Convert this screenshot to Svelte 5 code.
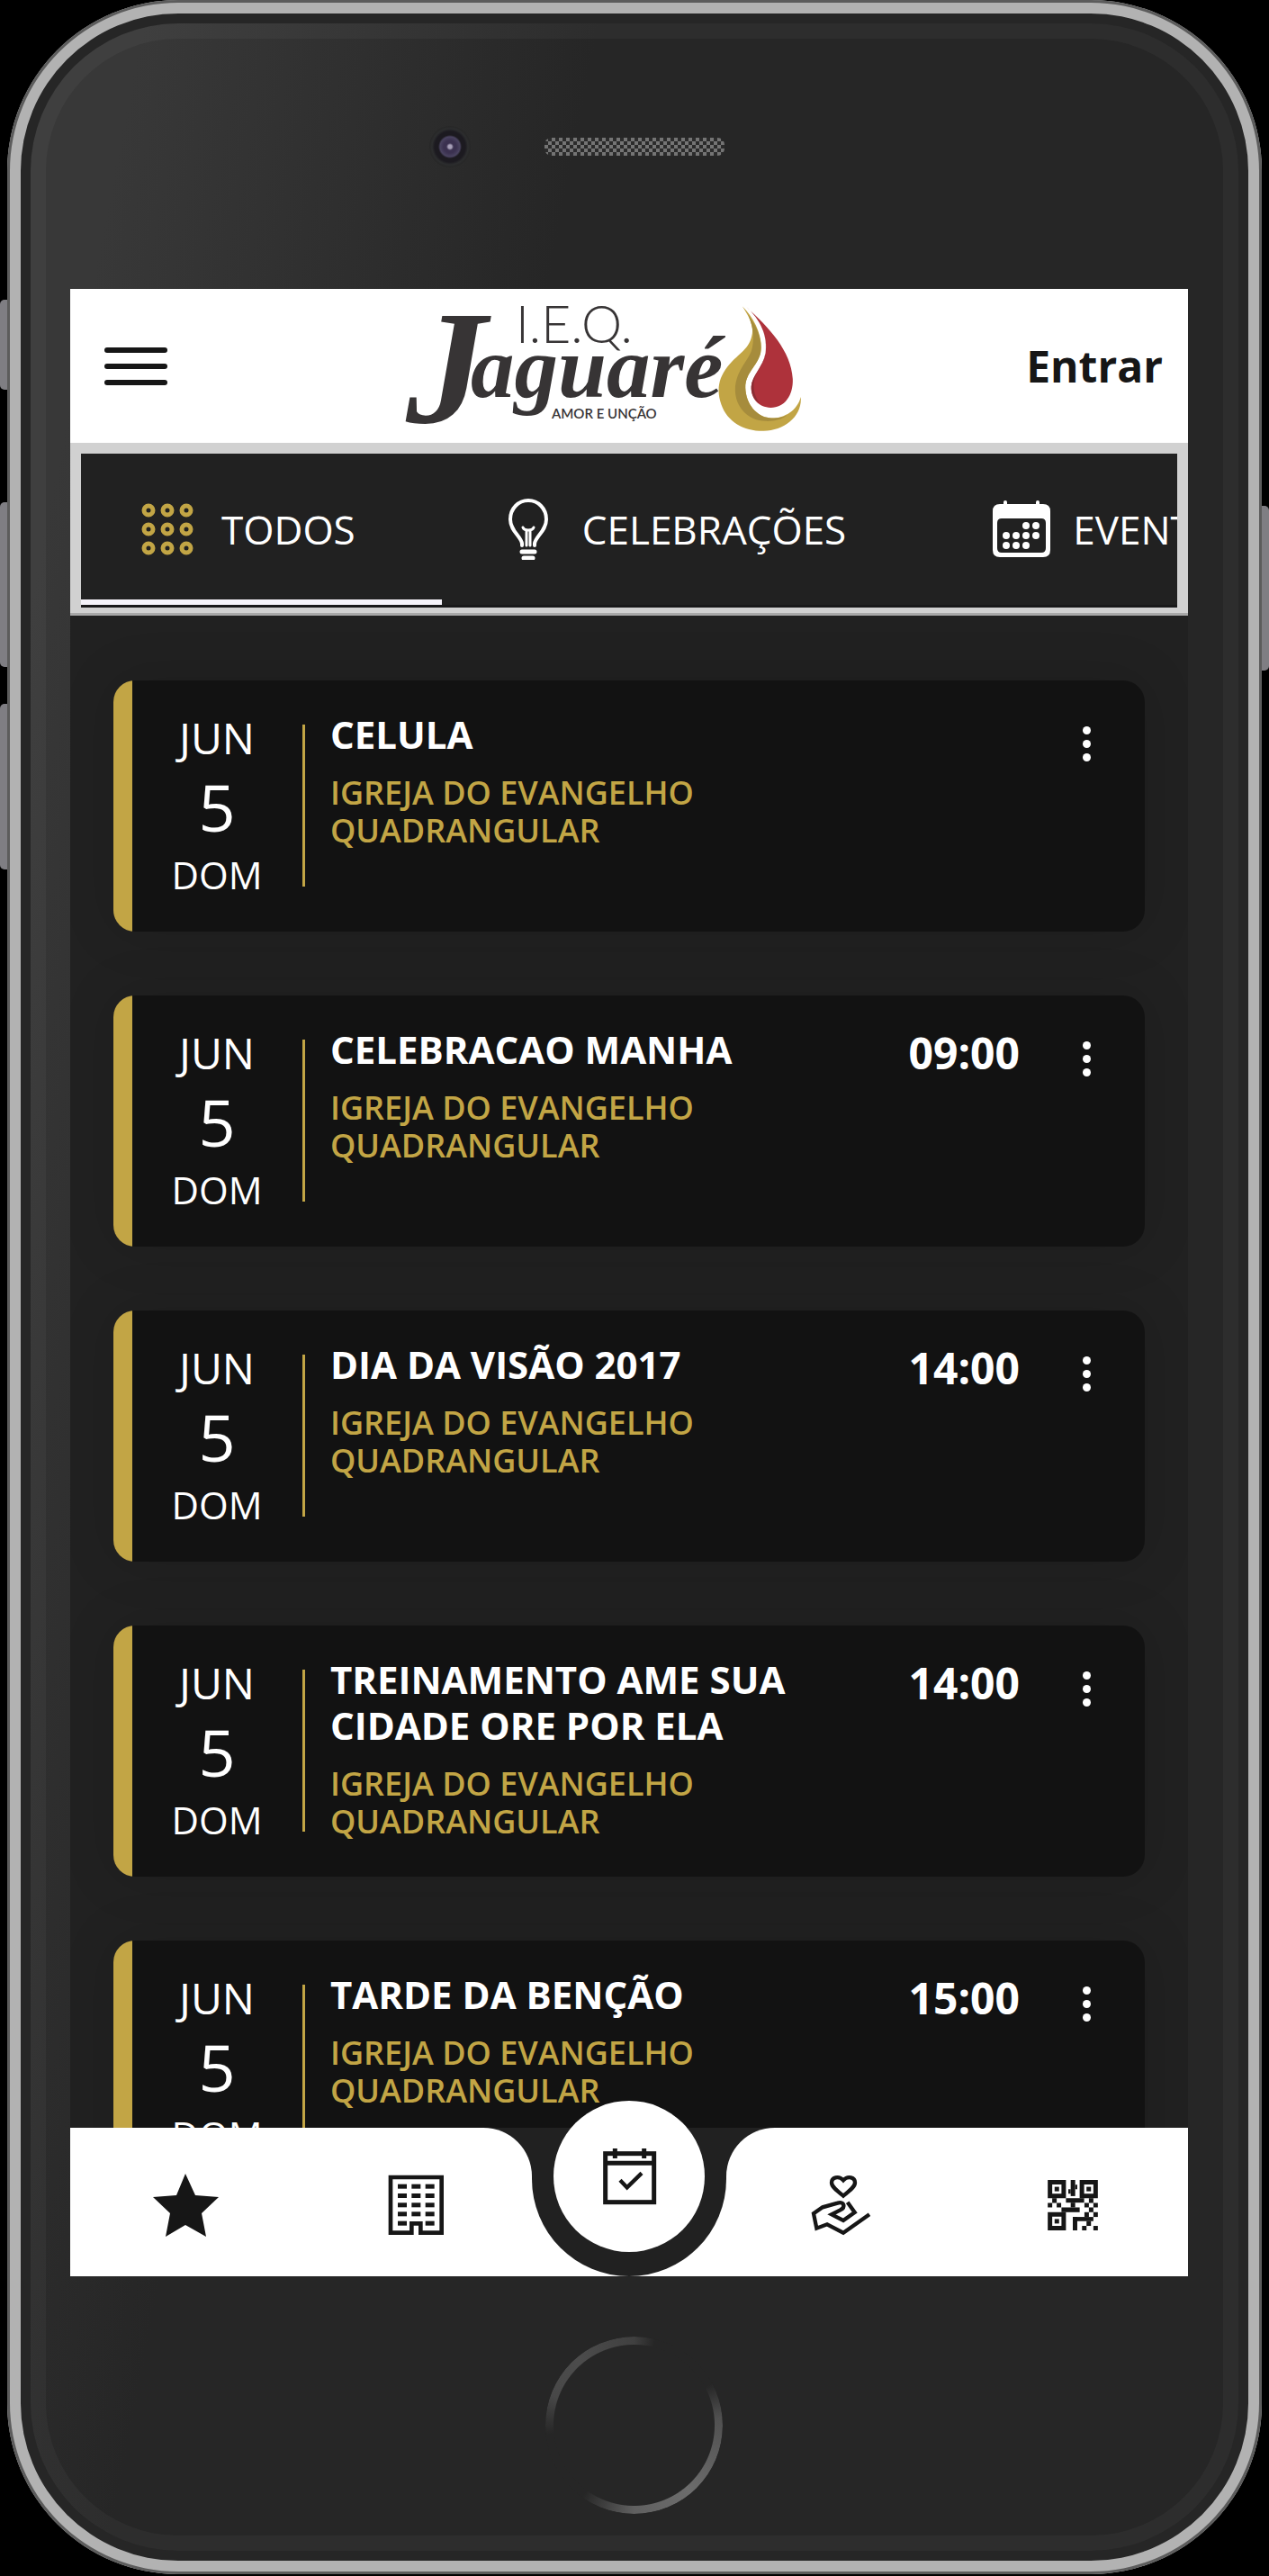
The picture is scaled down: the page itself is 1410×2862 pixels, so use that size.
<script>
  const church = 'IGREJA DO EVANGELHO QUADRANGULAR';
  const events = [
    { title: 'CELULA', time: '' },
    { title: 'CELEBRACAO MANHA', time: '09:00' },
    { title: 'DIA DA VISÃO 2017', time: '14:00' },
    { title: 'TREINAMENTO AME SUA CIDADE ORE POR ELA', time: '14:00' },
    { title: 'TARDE DA BENÇÃO', time: '15:00' }
  ];
  const tabs = [
    { id: 'all', label: 'TODOS' },
    { id: 'bulb', label: 'CELEBRAÇÕES' },
    { id: 'calendar', label: 'EVENTOS' }
  ];
  let active = $state('all');

  const ringSteps = [8, 29, 50];
  const calendarDots = [[37, 28], [48, 28], [15, 39], [26, 39], [37, 39], [48, 39], [15, 50], [26, 50], [37, 50]];
  const windows = [321, 352, 383, 413, 444].flatMap((y) =>
    [83, 129, 175].filter((x) => !(y === 444 && x === 129)).map((x) => [x, y])
  );
  const finders = [[822, 66], [929, 66], [822, 174]];
  const modules = [
    [899, 66, 15, 54], [891, 97, 8, 15], [914, 82, 7, 15], [837, 127, 15, 16], [822, 143, 15, 15],
    [852, 143, 15, 15], [883, 127, 61, 15], [899, 142, 15, 16], [868, 158, 61, 16], [960, 127, 15, 16],
    [945, 143, 15, 15], [975, 143, 15, 15], [960, 158, 15, 16], [945, 174, 15, 16], [975, 174, 15, 16],
    [906, 190, 69, 14], [906, 190, 15, 45], [952, 204, 15, 16], [937, 220, 15, 15], [975, 220, 15, 15]
  ];
</script>

<div class="stage">
  <span class="key key-mute"></span>
  <span class="key key-up"></span>
  <span class="key key-down"></span>
  <span class="key key-power"></span>

  <div class="phone">
    <div class="sensors">
      <span class="camera"></span>
      <svg class="speaker" viewBox="0 0 200 20" aria-hidden="true">
        <defs>
          <pattern id="mesh" width="8" height="8" patternUnits="userSpaceOnUse">
            <rect width="8" height="8" fill="#2b2b2b" />
            <path d="M0 0h4v4h-4zM4 4h4v4h-4z" fill="#747474" />
          </pattern>
        </defs>
        <rect width="200" height="20" rx="8" fill="url(#mesh)" />
      </svg>
    </div>

    <main class="screen">
      <header class="topbar">
        <button class="burger" aria-label="Menu"><i></i><i></i><i></i></button>
        <svg class="logo" viewBox="0 0 456 152" role="img" aria-label="I.E.Q. Jaguaré Amor e Unção">
          <text class="logo-top" x="138" y="50">I.E.Q.</text>
          <text class="logo-initial" x="16" y="138">J</text>
          <text class="logo-name" x="88" y="110">aguaré</text>
          <text class="logo-motto" x="178" y="134">AMOR E UNÇÃO</text>
          <g transform="scale(.344 .333) translate(-110 -60)">
            <path fill="#c2a545" d="M1243 88C1270 130 1282 160 1273 190C1262 235 1225 250 1195 290C1165 330 1160 370 1175 415C1195 475 1250 505 1312 504C1380 502 1437 455 1432 390C1420 440 1370 465 1330 460C1290 455 1255 415 1253 360C1253 310 1290 290 1302 245C1312 195 1285 130 1243 88Z" />
            <path fill="#a68c3c" d="M1262 116C1282 165 1282 205 1272 238C1258 275 1222 305 1220 365C1220 425 1262 470 1318 471C1345 472 1370 466 1388 452C1370 460 1350 463 1330 460C1290 455 1255 415 1253 360C1253 310 1290 290 1302 245C1310 200 1290 155 1262 116Z" />
            <path fill="#ae323b" d="M1256 90C1330 160 1400 235 1406 330C1408 385 1380 426 1335 426C1295 425 1270 395 1272 355C1275 320 1310 290 1318 245C1328 190 1300 130 1256 90Z" />
            <path fill="#8c2d33" d="M1314 180C1326 225 1318 262 1302 290C1286 315 1280 330 1280 355C1281 380 1288 396 1300 412C1280 400 1271 380 1272 355C1275 320 1310 290 1318 245C1320 225 1320 205 1314 180Z" />
          </g>
        </svg>
        <a class="login" href="#entrar">Entrar</a>
      </header>

      <div class="tabs" role="tablist">
        {#each tabs as tab}
          <button class="tab" class:active={active === tab.id} role="tab" aria-selected={active === tab.id} onclick={() => (active = tab.id)}>
            <span class="tab-icon">
              {#if tab.id === 'all'}
                <svg width="58" height="58" viewBox="0 0 58 58" fill="none" stroke="#c2a545" stroke-width="5">
                  {#each ringSteps as y}{#each ringSteps as x}<circle cx={x} cy={y} r="5" />{/each}{/each}
                </svg>
              {:else if tab.id === 'bulb'}
                <svg width="46" height="68" viewBox="0 0 46 68" fill="none" stroke="#fff" stroke-width="4" stroke-linecap="round">
                  <path d="M16 52V50C15 42 3 36 3 23C3 11 12 2 23 2S43 11 43 23C43 36 31 42 30 50V52" />
                  <path d="M17 32Q18 35 23 35Q28 35 29 32M21 36V52M25 36V52" stroke-width="3" />
                  <path d="M16 59H30M18 66H28" stroke-width="5" />
                </svg>
              {:else}
                <svg width="64" height="64" viewBox="0 0 64 64" fill="#fff">
                  <rect x="12" width="4" height="10" rx="2" /><rect x="48" width="4" height="10" rx="2" />
                  <path fill-rule="evenodd" d="M8 4H56Q64 4 64 12V55Q64 63 56 63H8Q0 63 0 55V12Q0 4 8 4ZM10 20Q5 20 5 25V53Q5 58 10 58H54Q59 58 59 53V25Q59 20 54 20Z" />
                  {#each calendarDots as [x, y]}<circle cx={x} cy={y} r="4" />{/each}
                </svg>
              {/if}
            </span>
            <span>{tab.label}</span>
          </button>
        {/each}
      </div>

      <section class="list">
        {#each events as event}
          <article class="card">
            <div class="date">
              <span class="month">JUN</span>
              <span class="day">5</span>
              <span class="weekday">DOM</span>
            </div>
            <div class="info">
              <h2>{event.title}</h2>
              <p>{church}</p>
            </div>
            <time>{event.time}</time>
            <button class="more" aria-label="Mais opções"><i></i><i></i><i></i></button>
          </article>
        {/each}
      </section>

      <nav class="bottom">
        <div class="side left">
          <a href="#favoritos" aria-label="Favoritos">
            <svg width="73" height="70" viewBox="0 0 73 70" fill="#161616"><path d="M36 0L47 24L73 26L54 44L59 70L36 57L14 70L19 44L0 26L26 24Z" /></svg>
          </a>
          <a href="#igrejas" aria-label="Igrejas">
            <svg width="63" height="68" viewBox="50 289 189 204" fill="#161616">
              <path d="M59 298H229V483H159V452H129V483H59Z" fill="none" stroke="#161616" stroke-width="14" />
              {#each windows as [x, y]}<rect {x} {y} width="30" height="15" />{/each}
            </svg>
          </a>
        </div>
        <div class="notch">
          <div class="well">
            <a class="agenda" href="#agenda" aria-label="Agenda">
              <svg width="61" height="64" viewBox="760 195 183 192" fill="none" stroke="#161616" stroke-width="15">
                <rect x="771" y="215" width="162" height="162" />
                <path d="M771 247H933M803 198V231M900 198V231" />
                <path d="M820 304L843 328L892 280" stroke-width="13" />
              </svg>
            </a>
          </div>
        </div>
        <div class="side right">
          <a href="#doar" aria-label="Doações">
            <svg width="68" height="68" viewBox="36 48 204 204" fill="none" stroke="#161616" stroke-width="13">
              <path d="M144 119C120 100 105 88 105 75C105 58 128 50 144 67C160 50 183 58 183 75C183 88 168 100 144 119Z" />
              <path d="M158 140L182 174L144 201L105 181L134 166C152 157 148 136 125 143L75 157L45 178L55 227L90 214L144 242L231 181" />
            </svg>
          </a>
          <a href="#qrcode" aria-label="QR Code">
            <svg width="56" height="56" viewBox="822 66 168 169" fill="#161616">
              {#each finders as [x, y]}
                <path fill-rule="evenodd" d="M{x} {y}h61v61h-61zM{x + 15} {y + 15}v31h31v-31z" />
                <rect x={x + 23} y={y + 23} width="15" height="15" />
              {/each}
              {#each modules as [x, y, width, height]}<rect {x} {y} {width} {height} />{/each}
            </svg>
          </a>
        </div>
      </nav>
    </main>

    <div class="chin"><button class="home" aria-label="Início"></button></div>
  </div>
</div>

<style>
  :global(body) {
    margin: 0;
    background: #000;
  }
  * {
    box-sizing: border-box;
  }
  button {
    padding: 0;
    border: 0;
    background: none;
    color: inherit;
    font: inherit;
    cursor: pointer;
  }
  svg {
    display: block;
  }
  .stage {
    position: relative;
    padding: 0 8px 2px;
    font-family: 'Open Sans', 'Noto Sans', sans-serif;
  }
  .key {
    position: absolute;
    left: 0;
    width: 10px;
    background: #7f7e83;
    border-radius: 5px 0 0 5px;
  }
  .key-mute { top: 333px; height: 100px; }
  .key-up { top: 558px; height: 183px; }
  .key-down { top: 782px; height: 184px; }
  .key-power {
    top: 562px;
    left: auto;
    right: 0;
    height: 183px;
    border-radius: 0 5px 5px 0;
  }
  .phone {
    position: relative;
    padding: 0 82px 0 70px;
    border-radius: 190px;
    background: linear-gradient(101deg, #383838 8%, #262626 34%);
    box-shadow:
      inset 0 0 0 3px #5c5c5c,
      inset 0 0 0 15px #b2b2b2,
      inset 0 0 0 26px #262626,
      inset 0 0 0 43px rgba(255, 255, 255, 0.035);
  }
  .sensors {
    display: grid;
    grid-template-columns: 1fr 200px 1fr;
    align-items: center;
    padding: 140px 0 135px 12px;
  }
  .camera {
    justify-self: end;
    width: 46px;
    height: 46px;
    margin-right: 82px;
    border-radius: 50%;
    background: radial-gradient(circle, #a79fb8 0 2px, #3b3150 4px 7px, #4a4360 11px, #1c1a20 13px 17px, #2c2d2e 20px, #262626 23px);
  }
  .speaker {
    width: 200px;
    height: 20px;
  }
  .screen {
    overflow: hidden;
    background: #212121;
  }
  .topbar {
    display: flex;
    align-items: center;
    justify-content: space-between;
    height: 171px;
    padding: 0 28px 0 38px;
    background: #fff;
  }
  .burger {
    display: grid;
    gap: 12px;
    width: 70px;
  }
  .burger i {
    height: 6px;
    border-radius: 3px;
    background: #161616;
  }
  .logo {
    width: 456px;
    height: 152px;
    fill: #373435;
  }
  .logo-top {
    font: 300 57px Lato, sans-serif;
  }
  .logo-initial {
    font: italic 700 180px 'Liberation Serif', serif;
  }
  .logo-name {
    font: italic 700 97px 'Liberation Serif', serif;
  }
  .logo-motto {
    font: 600 15px Lato, sans-serif;
  }
  .login {
    color: #161616;
    font-size: 48px;
    font-weight: 700;
    line-height: 64px;
    text-decoration: none;
  }
  .tabs {
    display: flex;
    overflow: hidden;
    border: solid #d1d1d1;
    border-width: 12px 12px 6px;
    box-shadow: 0 3px #a8a8a8;
    margin-bottom: 3px;
  }
  .tab {
    flex: none;
    display: flex;
    align-items: center;
    gap: 31px;
    height: 171px;
    padding: 0 96px 0 67px;
    border-bottom: 3px solid #19191a;
    color: #fff;
    font-size: 44px;
    line-height: 60px;
  }
  .tab.active {
    box-shadow: inset 0 -6px #f5f3fa;
  }
  .tab-icon {
    display: grid;
    place-items: center;
    width: 58px;
  }
  .list {
    display: grid;
    gap: 71px;
    padding: 72px 48px 0;
  }
  .card {
    display: flex;
    align-items: flex-start;
    min-height: 279px;
    padding: 34px 33px 0 21px;
    border-radius: 24px;
    background: linear-gradient(to right, #c2a545 21px, #121212 21px);
    box-shadow: 0 0 60px rgba(0, 0, 0, 0.14);
    color: #fff;
  }
  .date {
    flex: none;
    display: grid;
    justify-items: center;
    align-content: center;
    width: 192px;
    height: 180px;
    margin-top: 15px;
    padding: 2px 1px 0 0;
    border-right: 3px solid #c2a545;
  }
  .month {
    font-size: 48px;
    line-height: 60px;
  }
  .day {
    font-size: 72px;
    line-height: 92px;
  }
  .weekday {
    font-size: 42px;
    line-height: 60px;
  }
  .info {
    flex: 1;
    min-width: 0;
    padding-left: 28px;
  }
  h2 {
    margin: 0;
    font-size: 42px;
    font-weight: 700;
    line-height: 51px;
  }
  p {
    max-width: 480px;
    margin: 19px 0 0;
    color: #c2a545;
    font-size: 36px;
    font-weight: 600;
    line-height: 42px;
  }
  time {
    flex: none;
    min-width: 123px;
    font-size: 48px;
    font-weight: 700;
    line-height: 60px;
    text-align: right;
  }
  .more {
    flex: none;
    display: grid;
    justify-items: center;
    gap: 6px;
    width: 64px;
    margin-left: 42px;
    padding: 17px 0;
  }
  .more i {
    width: 9px;
    height: 9px;
    border-radius: 50%;
    background: #fff;
  }
  .bottom {
    position: relative;
    display: flex;
    height: 165px;
    margin-top: -71px;
    background: #212121;
  }
  .side {
    flex: 1;
    display: grid;
    grid-template-columns: 1fr 1fr;
    place-items: center;
    padding-top: 6px;
    background: #fff;
  }
  .left {
    border-radius: 0 54px 0 0;
  }
  .right {
    border-radius: 54px 0 0;
  }
  .notch {
    width: 216px;
    background: linear-gradient(#212121 57px, #fff 57px);
  }
  .well {
    display: flex;
    justify-content: center;
    height: 165px;
    border-radius: 0 0 108px 108px;
    background: #212121;
  }
  .agenda {
    display: grid;
    place-items: center;
    width: 168px;
    height: 168px;
    margin-top: -30px;
    border-radius: 50%;
    background: #fff;
  }
  .chin {
    display: flex;
    justify-content: center;
    padding: 67px 0 67px 10px;
  }
  .home {
    width: 197px;
    height: 197px;
    border-radius: 50%;
    background: conic-gradient(#404040, #262626 14deg 62deg, #505050 85deg, #6c6c6c 140deg, #606060 180deg, #262626 216deg 264deg, #484848 290deg, #4c4c4c 320deg, #404040);
    mask: radial-gradient(closest-side, transparent 89px, #000 90px);
  }
</style>
